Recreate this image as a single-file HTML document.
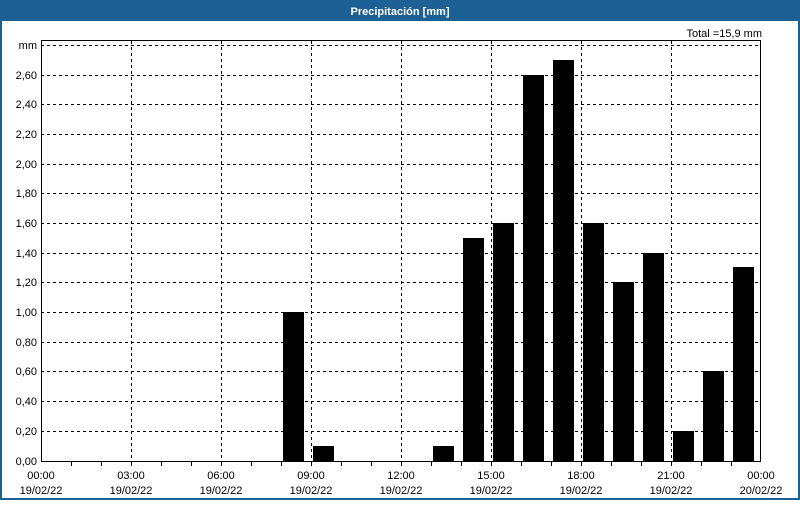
<!DOCTYPE html>
<html><head><style>
body{margin:0;width:800px;height:500px;overflow:hidden;background:#fff;font-family:"Liberation Sans",sans-serif}
</style></head><body>
<svg width="800" height="500" xmlns="http://www.w3.org/2000/svg" font-family="Liberation Sans, sans-serif" font-size="11">
<rect x="0" y="0" width="800" height="500" fill="#1d6096"/>
<rect x="2" y="21" width="796" height="477" fill="#fff"/>
<text x="400" y="15" fill="#fff" font-weight="bold" text-anchor="middle">Precipitación [mm]</text>
<text x="762" y="37" text-anchor="end">Total =15,9 mm</text>
<g stroke="#000" stroke-width="1" stroke-dasharray="3,3" fill="none">
<path d="M41 45.5H760M41 75.5H760M41 104.5H760M41 134.5H760M41 164.5H760M41 193.5H760M41 223.5H760M41 253.5H760M41 282.5H760M41 312.5H760M41 342.5H760M41 371.5H760M41 401.5H760M41 431.5H760"/>
<path d="M131.5 41V461M221.5 41V461M311.5 41V461M401.5 41V461M491.5 41V461M581.5 41V461M671.5 41V461"/>
</g>
<g fill="#000">
<rect x="283" y="312" width="21" height="149"/>
<rect x="313" y="446" width="21" height="15"/>
<rect x="433" y="446" width="21" height="15"/>
<rect x="463" y="238" width="21" height="223"/>
<rect x="493" y="223" width="21" height="238"/>
<rect x="523" y="75" width="21" height="386"/>
<rect x="553" y="60" width="21" height="401"/>
<rect x="583" y="223" width="21" height="238"/>
<rect x="613" y="282" width="21" height="179"/>
<rect x="643" y="253" width="21" height="208"/>
<rect x="673" y="431" width="21" height="30"/>
<rect x="703" y="371" width="21" height="90"/>
<rect x="733" y="267" width="21" height="194"/>
</g>
<rect x="41.5" y="40.5" width="719" height="421" fill="none" stroke="#000"/>
<path stroke="#000" d="M71.5 461V466M101.5 461V466M131.5 461V466M161.5 461V466M191.5 461V466M221.5 461V466M251.5 461V466M281.5 461V466M311.5 461V466M341.5 461V466M371.5 461V466M401.5 461V466M431.5 461V466M461.5 461V466M491.5 461V466M521.5 461V466M551.5 461V466M581.5 461V466M611.5 461V466M641.5 461V466M671.5 461V466M701.5 461V466M731.5 461V466"/>
<g text-anchor="end">
<text x="37" y="49">mm</text><text x="37" y="79">2,60</text><text x="37" y="108">2,40</text><text x="37" y="138">2,20</text><text x="37" y="168">2,00</text><text x="37" y="197">1,80</text><text x="37" y="227">1,60</text><text x="37" y="257">1,40</text><text x="37" y="286">1,20</text><text x="37" y="316">1,00</text><text x="37" y="346">0,80</text><text x="37" y="375">0,60</text><text x="37" y="405">0,40</text><text x="37" y="435">0,20</text><text x="37" y="465">0,00</text>
</g>
<g text-anchor="middle">
<text x="41" y="479">00:00</text><text x="41" y="494">19/02/22</text>
<text x="131" y="479">03:00</text><text x="131" y="494">19/02/22</text>
<text x="221" y="479">06:00</text><text x="221" y="494">19/02/22</text>
<text x="311" y="479">09:00</text><text x="311" y="494">19/02/22</text>
<text x="401" y="479">12:00</text><text x="401" y="494">19/02/22</text>
<text x="491" y="479">15:00</text><text x="491" y="494">19/02/22</text>
<text x="581" y="479">18:00</text><text x="581" y="494">19/02/22</text>
<text x="671" y="479">21:00</text><text x="671" y="494">19/02/22</text>
<text x="761" y="479">00:00</text><text x="761" y="494">20/02/22</text>
</g>
</svg>
</body></html>
